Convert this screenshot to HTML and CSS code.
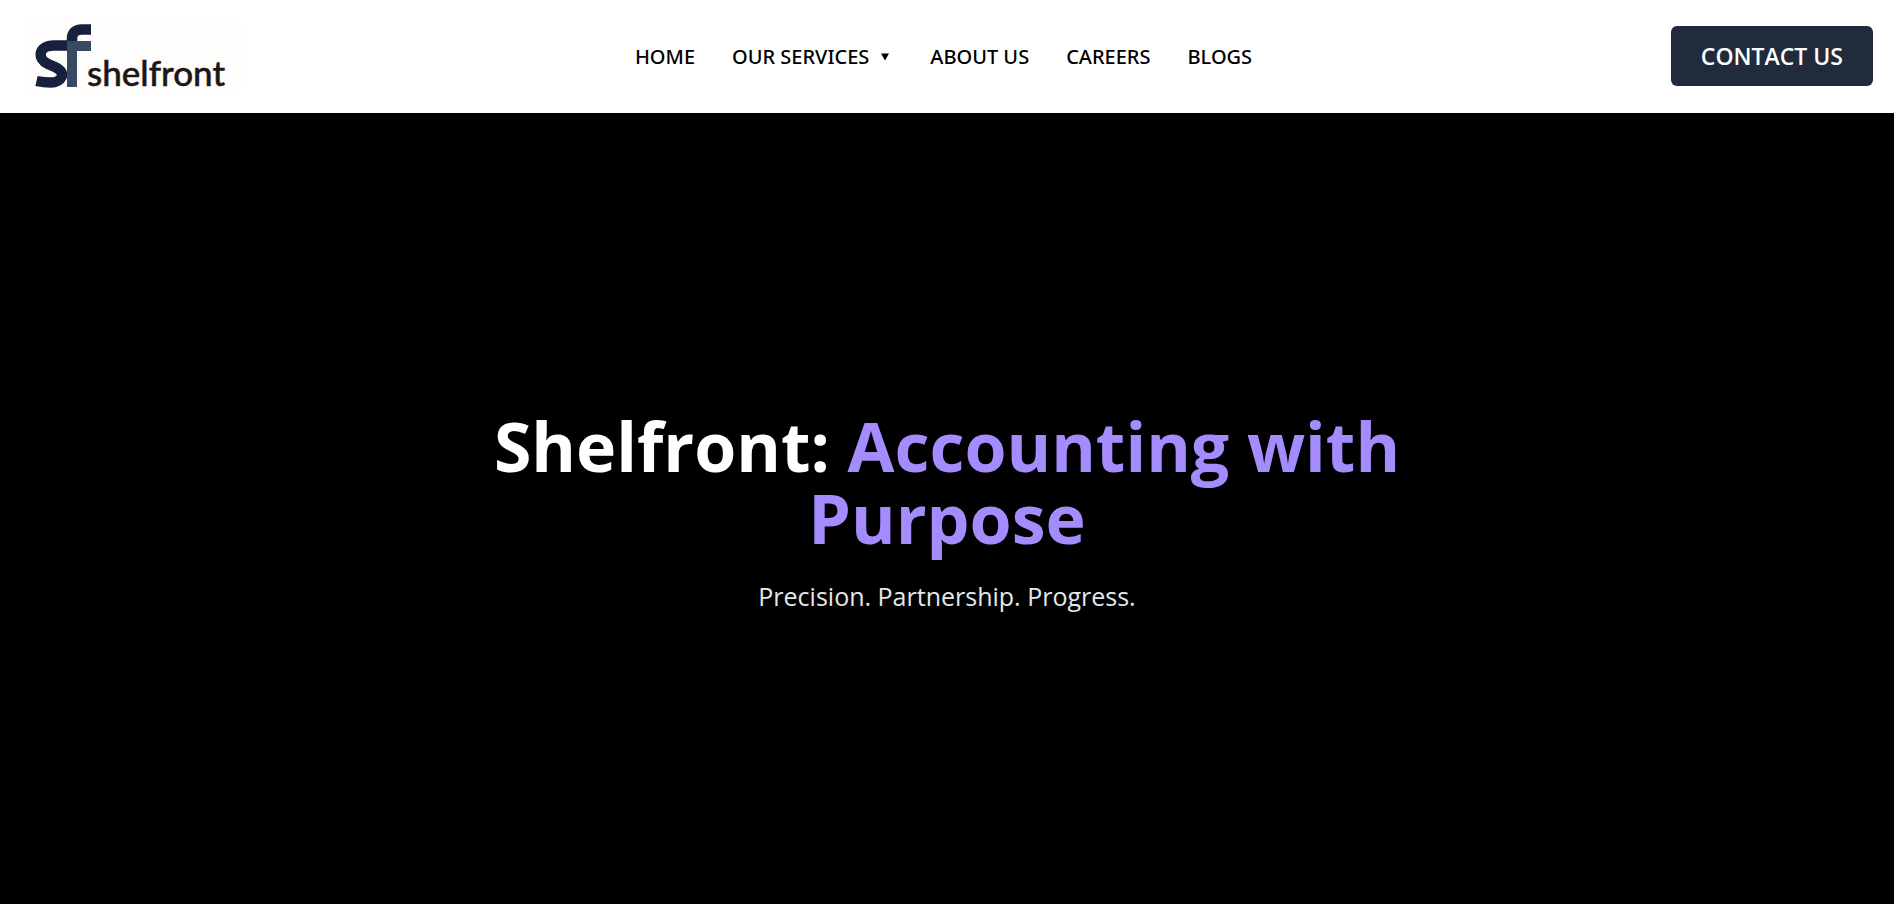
FILE: index.html
```html
<!DOCTYPE html>
<html lang="en">
<head>
<meta charset="utf-8">
<meta name="viewport" content="width=device-width, initial-scale=1">
<title>Shelfront</title>
<link rel="stylesheet" href="styles.css">
</head>
<body>
<header class="header">
  <a class="logo" href="#" aria-label="shelfront">
    <svg class="logo-image" width="222" height="66" viewBox="0 0 222 66">
      <rect width="222" height="66" fill="#fefdfb"/>
      <path d="M45 22.500H30C14 22.500 13 36 24 41L31 44C44 50 37 59.500 27 59.500C22 59.500 17 59 12.500 58" fill="none" stroke="#17213f" stroke-width="10.500"/>
      <path d="M48 19V16Q48 6.500 58 6.500H67" fill="none" stroke="#17213f" stroke-width="10.500"/>
      <path d="M43 18H67V28H53V64H43Z" fill="#384a61"/>
      <text class="logo-text" x="63" y="63">shelfront</text>
    </svg>
  </a>
  <nav class="nav">
    <a href="#">HOME</a>
    <a class="has-menu" href="#">OUR SERVICES
      <svg width="8" height="8" viewBox="0 0 8 8" aria-hidden="true"><path d="M0 .5H8L4 7.500Z" fill="currentColor"/></svg>
    </a>
    <a href="#">ABOUT US</a>
    <a href="#">CAREERS</a>
    <a href="#">BLOGS</a>
  </nav>
  <button class="contact" type="button">CONTACT US</button>
</header>
<main class="hero">
  <h1 class="title">Shelfront: <span class="accent">Accounting with Purpose</span></h1>
  <p class="subtitle">Precision. Partnership. Progress.</p>
</main>
</body>
</html>
```
FILE: styles.css
```css
* {
  box-sizing: border-box;
}

body {
  margin: 0;
  min-height: 100vh;
  display: flex;
  flex-direction: column;
  background: #000;
  font-family: "Segoe UI", "Open Sans", "Noto Sans", sans-serif;
}

.header {
  display: grid;
  grid-template-columns: 1fr auto 1fr;
  align-items: center;
  padding: 23px 21px 24px 24px;
  background: #fff;
}

.logo,
.logo-image {
  display: block;
}

.logo-image {
  overflow: visible;
}

.logo-text {
  font-family: Lato, sans-serif;
  font-size: 35px;
  font-weight: 500;
  fill: #1c1619;
  stroke: #1c1619;
  stroke-width: 0.5px;
}

.nav {
  display: flex;
  gap: 37px;
  margin-right: 10px;
  padding-top: 2px;
}

.nav a {
  color: #000;
  font-family: "Segoe UI", "Noto Sans", sans-serif;
  font-size: 20px;
  font-weight: 500;
  line-height: 30px;
  text-decoration: none;
}

.nav .has-menu {
  display: flex;
  align-items: center;
  gap: 12px;
  padding-right: 4px;
}

.contact {
  justify-self: end;
  padding: 15px 30px;
  border: 0;
  border-radius: 6px;
  background: #202b3b;
  color: #fff;
  font-family: inherit;
  font-size: 23px;
  font-weight: 600;
  line-height: 30px;
}

.hero {
  flex: 1;
  display: flex;
  flex-direction: column;
  align-items: center;
  justify-content: center;
  gap: 22px;
  padding: 28px 24px 20px;
  text-align: center;
}

.title {
  margin: 0;
  max-width: 960px;
  color: #fff;
  font-size: 68px;
  font-weight: 700;
  line-height: 72px;
}

.accent {
  color: #a48cff;
}

.subtitle {
  margin: 0;
  color: #e5e7eb;
  font-size: 25px;
  line-height: 40px;
}
```
